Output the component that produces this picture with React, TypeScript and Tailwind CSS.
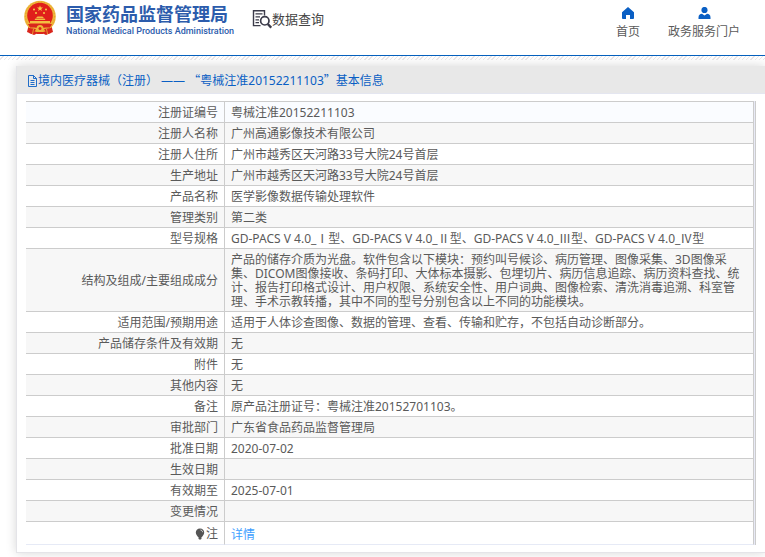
import React from "react";

interface Row {
	label: string;
	value: string;
}

const rows: Row[] = [
	{ label: "注册证编号", value: "粤械注准20152211103" },
	{ label: "注册人名称", value: "广州高通影像技术有限公司" },
	{ label: "注册人住所", value: "广州市越秀区天河路33号大院24号首层" },
	{ label: "生产地址", value: "广州市越秀区天河路33号大院24号首层" },
	{ label: "产品名称", value: "医学影像数据传输处理软件" },
	{ label: "管理类别", value: "第二类" },
	{ label: "型号规格", value: "GD-PACS V 4.0_Ⅰ型、GD-PACS V 4.0_Ⅱ型、GD-PACS V 4.0_Ⅲ型、GD-PACS V 4.0_Ⅳ型" },
	{
		label: "结构及组成/主要组成成分",
		value: "产品的储存介质为光盘。软件包含以下模块：预约叫号候诊、病历管理、图像采集、3D图像采集、DICOM图像接收、条码打印、大体标本摄影、包埋切片、病历信息追踪、病历资料查找、统计、报告打印格式设计、用户权限、系统安全性、用户词典、图像检索、清洗消毒追溯、科室管理、手术示教转播，其中不同的型号分别包含以上不同的功能模块。",
	},
	{ label: "适用范围/预期用途", value: "适用于人体诊查图像、数据的管理、查看、传输和贮存，不包括自动诊断部分。" },
	{ label: "产品储存条件及有效期", value: "无" },
	{ label: "附件", value: "无" },
	{ label: "其他内容", value: "无" },
	{ label: "备注", value: "原产品注册证号：粤械注准20152701103。" },
	{ label: "审批部门", value: "广东省食品药品监督管理局" },
	{ label: "批准日期", value: "2020-07-02" },
	{ label: "生效日期", value: "" },
	{ label: "有效期至", value: "2025-07-01" },
	{ label: "变更情况", value: "" },
];

function Emblem() {
	return (
		<svg viewBox="0 0 32 36" className="w-8 h-9 shrink-0" aria-hidden="true">
			<path d="M5 24 L3 32 L10 35 L16 32 L22 35 L29 32 L27 24 Z" fill="#d9251c" />
			<circle cx="16" cy="16.500" r="15.800" fill="#eeb53a" />
			<circle cx="16" cy="16.500" r="14.500" fill="none" stroke="#e09a2c" strokeWidth="1" strokeDasharray="1 2" />
			<circle cx="16" cy="15.500" r="12.800" fill="#e01f1b" />
			<path d="M16 5.500l.8 2h2.200l-1.800 1.400.7 2.100-1.900-1.300-1.900 1.300.7-2.100L13 7.500h2.200z" fill="#f8cf4a" />
			<circle cx="10" cy="9.500" r="1" fill="#f8cf4a" />
			<circle cx="12" cy="13" r="1" fill="#f8cf4a" />
			<circle cx="20" cy="13" r="1" fill="#f8cf4a" />
			<circle cx="22" cy="9.500" r="1" fill="#f8cf4a" />
			<path d="M12 18l1.500-1.500h5L20 18zM10.500 20l1-1.500h9l1 1.500zM6 23.500V21h20v2.500z" fill="#f3bd42" />
			<path d="M4 24h24l-2 3.500H6z" fill="#d9251c" />
			<circle cx="16" cy="28.500" r="3.500" fill="#eeb53a" />
			<circle cx="16" cy="28.500" r="1.500" fill="#d9251c" />
			<path d="M5 28l7 1-3 5-4-1zM27 28l-7 1 3 5 4-1zM14 32h4l2 2h-8z" fill="#d9251c" />
			<path d="M9.500 29l-1 5M22.500 29l1 5" stroke="#eeb53a" strokeWidth=".8" />
		</svg>
	);
}

function SearchDocIcon() {
	return (
		<svg viewBox="0 0 20 20" className="w-5 h-5 shrink-0" fill="none" stroke="#3b3b4a" aria-hidden="true">
			<path d="M12.500 6.500V1.800H1.500v14.800h7" strokeWidth="1.400" />
			<path d="M3.500 4.800h7M3.500 7.800h4.500M3.500 10.800h3.500M3.500 13.700h3.500" strokeWidth="1.200" />
			<circle cx="12.800" cy="11.800" r="4.200" strokeWidth="1.700" />
			<path d="M15.800 15l3.400 3.700" strokeWidth="2.400" />
		</svg>
	);
}

function HomeIcon() {
	return (
		<svg viewBox="0 0 14 12" className="w-[14px] h-3" fill="#0a5fc4" aria-hidden="true">
			<path d="M7 0L1 5.200V11c0 .6.300 1 .900 1H5V8h4v4h3.100c.6 0 .9-.4.900-1V5.200z" />
		</svg>
	);
}

function UserIcon() {
	return (
		<svg viewBox="0 0 14 12" className="w-[14px] h-3" fill="#0a5fc4" aria-hidden="true">
			<circle cx="7.500" cy="3" r="3.100" />
			<path d="M1.500 12v-1.500C1.500 8 3 7 5 6.800l2.500 1.700L10 6.800c2 .2 3.500 1.200 3.500 3.700V12z" />
		</svg>
	);
}

function FileIcon() {
	return (
		<svg viewBox="0 0 11 12" className="w-[11px] h-3 shrink-0" fill="none" stroke="#0a5fc4" aria-hidden="true">
			<path d="M1.500 .5h5l3 3v8h-8zM6.500 .5v3h3" strokeWidth=".9" />
			<path d="M3.500 5.500h4M3.500 7.500h4M3.500 9.500h4" strokeWidth=".9" />
		</svg>
	);
}

function BulbIcon() {
	return (
		<svg viewBox="0 0 10 12" className="w-[10px] h-3" aria-hidden="true">
			<path d="M5 .5C2.400.5.800 2.300.800 4.500c0 2 1.400 3.100 2.200 4.500h4c.8-1.400 2.200-2.500 2.200-4.500C9.200 2.300 7.600.5 5 .5z" fill="#555" />
			<path d="M3.500 9h3v1.800L5.800 11.500H4.200l-.7-.7z" fill="#555" />
			<path d="M5.500 2c1.200.2 2 1 2.100 2.200" fill="none" stroke="#fff" strokeWidth=".8" />
		</svg>
	);
}

function Header() {
	return (
		<header>
			<div className="flex h-14 items-start justify-between border-b border-[#0560bd] pl-6 pr-[25px]">
				<div className="flex items-start gap-[18px]">
					<a href="#" className="flex items-start gap-[10px]">
						<Emblem />
						<span className="flex flex-col whitespace-nowrap pt-1 text-[#2c5cac]">
							<span className="text-[18px] leading-5 font-bold">国家药品监督管理局</span>
							<span className="font-[Roboto,sans-serif] text-[9px] leading-[14px] font-medium">
								National Medical Products Administration
							</span>
						</span>
					</a>
					<a href="#" className="flex items-center whitespace-nowrap pt-[9px] text-[13px] leading-5 text-[#444]">
						<SearchDocIcon />
						数据查询
					</a>
				</div>
				<nav className="flex gap-7 whitespace-nowrap pt-[7px] leading-[14px]">
					<a href="#" className="flex flex-col items-center gap-[6px]">
						<HomeIcon />
						首页
					</a>
					<a href="#" className="flex flex-col items-center gap-[6px]">
						<UserIcon />
						政务服务门户
					</a>
				</nav>
			</div>
			<div className="h-1 bg-[repeating-linear-gradient(135deg,#fff_0px,#fff_2px,#ebe7e9_2px,#ebe7e9_3px)]" />
		</header>
	);
}

export default function App() {
	return (
		<div
			lang="zh-CN"
			className="font-['Noto_Sans','Noto_Sans_CJK_SC',sans-serif] bg-white pb-1 text-[12px] text-[#5a5a5a]"
		>
			<Header />
			<main className="ml-4 mt-[6px] border-b border-l border-[#e4e4e8] bg-white shadow-[0_0_10px_rgba(0,0,0,0.16)]">
				<h1 className="flex h-7 items-center border-b border-[#e4e6f0] bg-[#e8e8e8] pl-[10px] pt-[2px] leading-[14px] text-[#0a5fc4]">
					<FileIcon />
					<span>
						境内医疗器械（注册） —— <span className="font-['Noto_Sans_CJK_SC',sans-serif]">“</span>
						粤械注准20152211103
						<span className="font-['Noto_Sans_CJK_SC',sans-serif]">”</span>
						基本信息
					</span>
				</h1>
				<div className="mb-[7px] ml-[9px] mr-[9px] mt-[7px] border-r border-[#ccc] bg-[#e8eaf6] pr-px">
					<table className="w-full table-fixed border-separate border-spacing-0 border-t border-[#ccc] bg-white leading-[14px]">
						<colgroup>
							<col className="w-[199px]" />
							<col />
						</colgroup>
						<tbody>
							{rows.map((row) => (
								<tr key={row.label} className="first:bg-[#fafcff] even:bg-[#f7f7f7]">
									<th scope="row" className="h-[21px] border-b border-r border-[#ccc] pb-[2px] pr-[6px] pt-1 text-right font-normal">
										{row.label}
									</th>
									<td className="border-b border-r border-[#ccc] pb-[2px] pl-[6px] pr-2 pt-1">{row.value}</td>
								</tr>
							))}
							<tr>
								<th scope="row" className="h-[23px] border-b border-r border-b-[#e6eaf6] border-r-[#ccc] pr-[6px] pt-[2px] font-normal">
									<span className="flex items-center justify-end gap-px">
										<BulbIcon />
										注
									</span>
								</th>
								<td className="border-b border-r border-b-[#e6eaf6] border-r-[#ccc] pl-[6px] pt-1">
									<a href="#" className="text-[#409eff]">
										详情
									</a>
								</td>
							</tr>
						</tbody>
					</table>
				</div>
			</main>
		</div>
	);
}
